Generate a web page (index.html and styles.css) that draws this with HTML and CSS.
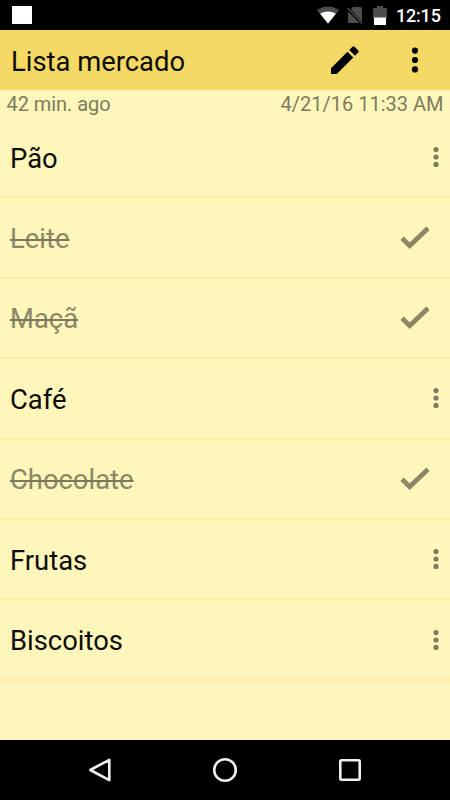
FILE: index.html
```html
<!DOCTYPE html>
<html lang="pt">
<head>
<meta charset="utf-8">
<title>Lista mercado</title>
<link rel="stylesheet" href="styles.css">
</head>
<body>
<svg class="defs" width="0" height="0">
  <symbol id="more" viewBox="0 0 8 22"><circle cx="4" cy="3.6" r="2.6"/><circle cx="4" cy="11" r="2.6"/><circle cx="4" cy="18.4" r="2.6"/></symbol>
  <symbol id="check" viewBox="0 0 30 24"><path d="M2 12.2 9.7 19.7 28 2.2" fill="none" stroke="currentColor" stroke-width="4.8"/></symbol>
</svg>
<div class="screen">
  <header class="status">
    <span class="notice"></span>
    <svg class="wifi" viewBox="0 0 22 18"><path fill="#4d4d4d" d="M0 4.3C6-.8 16-.8 22 4.3L11 18z"/><path fill="#fff" d="M3.2 7.7C8 4.8 14 4.8 18.8 7.7L11 17.6z"/></svg>
    <svg class="sim" viewBox="0 0 16 19"><path fill="#4d4d4d" d="M6 1h7.5Q15 1 15 2.5V15.5L3.8 3.2zM1 5.5 12.3 17H2.5Q1 17 1 15.5z"/><path d="M.5 2 15.3 17.5" stroke="#4d4d4d" stroke-width="1.5"/></svg>
    <svg class="battery" viewBox="0 0 14 20"><path fill="#4d4d4d" d="M4 0h6v2h2.5Q14 2 14 3.5V12H0V3.5Q0 2 1.5 2H4z"/><path fill="#fff" d="M1 11.5h12V19H1z"/></svg>
    <span class="clock">12:15</span>
  </header>
  <div class="toolbar">
    <h1>Lista mercado</h1>
    <svg class="edit" viewBox="0 0 30 30"><path d="M1 23.2V29h5.8L23.3 12.5 17.5 6.7zM28.2 7.6a1.5 1.5 0 0 0 0-2.2L24.6 1.8a1.5 1.5 0 0 0-2.2 0L19.2 5l5.8 5.8z"/></svg>
    <svg class="overflow" viewBox="0 0 8 26"><circle cx="4" cy="3.6" r="3.1"/><circle cx="4" cy="13" r="3.1"/><circle cx="4" cy="22.4" r="3.1"/></svg>
  </div>
  <div class="meta"><span class="ago">42 min. ago</span><span class="date">4/21/16 11:33 AM</span></div>
  <ul class="list">
    <li><span>Pão</span><svg class="more"><use href="#more"/></svg></li>
    <li class="done"><span>Leite</span><svg class="check"><use href="#check"/></svg></li>
    <li class="done"><span>Maçã</span><svg class="check"><use href="#check"/></svg></li>
    <li><span>Café</span><svg class="more"><use href="#more"/></svg></li>
    <li class="done"><span>Chocolate</span><svg class="check"><use href="#check"/></svg></li>
    <li><span>Frutas</span><svg class="more"><use href="#more"/></svg></li>
    <li><span>Biscoitos</span><svg class="more"><use href="#more"/></svg></li>
  </ul>
  <nav class="nav">
    <svg viewBox="0 0 26 26"><path d="M3.3 13 22.3 2.8v20.4z"/></svg>
    <svg viewBox="0 0 26 26"><circle cx="13" cy="13" r="10.8"/></svg>
    <svg viewBox="0 0 26 26"><rect x="3.3" y="3.3" width="19.4" height="19.4" rx="1"/></svg>
  </nav>
</div>
</body>
</html>
```
FILE: styles.css
```css
* { box-sizing: border-box; }
body { margin: 0; font-family: Roboto, sans-serif; color: #0d0c08; }
.defs { position: absolute; }
.screen { width: 450px; height: 800px; display: flex; flex-direction: column; background: #fef6ba; overflow: hidden; }
.status { height: 30px; flex: none; background: #000; display: flex; align-items: flex-start; padding: 6px 10px 0 12px; color: #fff; }
.notice { width: 20px; height: 18px; background: #fff; margin-right: auto; }
.wifi { width: 22px; height: 18px; }
.sim { width: 16px; height: 19px; margin-left: 8px; }
.battery { width: 14px; height: 20px; margin-left: 10px; }
.clock { font-size: 18px; line-height: 20px; font-weight: 500; margin-left: 9px; width: 44px; white-space: nowrap; letter-spacing: -.2px; }
.toolbar { height: 60px; flex: none; background: #f4d964; display: flex; align-items: center; padding: 0 31px 0 11px; }
h1 { margin: 3px auto 0 0; font-size: 27.4px; line-height: 32px; font-weight: 400; white-space: nowrap; }
.edit { width: 30px; height: 30px; margin-right: 51px; }
.overflow { width: 8px; height: 26px; }
.meta { height: 28px; flex: none; display: flex; justify-content: space-between; padding: 3px 6.5px 0; font-size: 20px; line-height: 23px; color: #7f7b5e; }
.ago { letter-spacing: -.05px; }
.list { flex: 1; margin: 0; padding: 0; list-style: none; }
li { height: 80.4px; display: flex; align-items: center; justify-content: space-between; padding: 0 10px; border-bottom: 2px solid #fceea8; font-size: 27.4px; line-height: 32px; }
li span { padding-top: 3px; }
.more { width: 8px; height: 22px; fill: #7f7b5d; }
.check { width: 30px; height: 24px; margin-right: 10px; color: #8b8767; }
.done span { color: #8b8767; text-decoration: line-through 2px #7b775a; }
.nav { height: 60px; flex: none; background: #000; display: flex; justify-content: space-between; align-items: center; padding: 0 87px; }
.nav svg { width: 26px; height: 26px; fill: none; stroke: #eee; stroke-width: 2.6; stroke-linejoin: round; }
```
